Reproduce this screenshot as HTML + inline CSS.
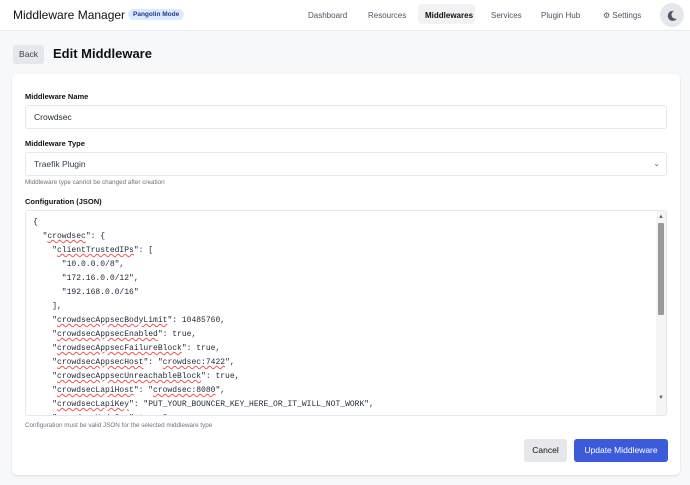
<!DOCTYPE html><html><head><style>
*{box-sizing:border-box;margin:0;padding:0}
body{width:690px;height:485px;background:#f7f8fa;font-family:"Liberation Sans",sans-serif;color:#1f2937;overflow:hidden;position:relative}
.nav{position:absolute;left:0;top:0;width:690px;height:31px;background:#fff;border-bottom:1px solid #e8eaee}
.abs{position:absolute;white-space:nowrap}
.title{left:13px;top:8px;font-size:12px;color:#111}
.badge{left:128px;top:9px;font-size:6.5px;font-weight:bold;background:#dbeafe;color:#1e3a8a;border-radius:7px;padding:2px 5px}
.nl{font-size:8px;color:#4b5563;top:11px}
.act{left:418px;top:4px;width:57px;height:20px;background:#f1f2f4;border-radius:4px}
.moon{left:660px;top:3px;width:24px;height:24px;border-radius:50%;background:#e5e7eb}
.back{left:13px;top:45px;width:31px;height:19px;background:#e5e7eb;border-radius:3px;font-size:8.5px;text-align:center;line-height:19px;color:#374151}
.h1{left:53px;top:46px;font-size:13px;font-weight:bold;color:#111}
.card{left:12px;top:74px;width:668px;height:401px;background:#fff;border-radius:5px;box-shadow:0 1px 2px rgba(0,0,0,.12)}
.lbl{font-size:7.5px;font-weight:bold;color:#111;left:25px}
.inp{left:25px;width:642px;height:24px;border:1px solid #e5e7eb;border-radius:3px;font-size:8.5px;padding-left:8px;line-height:22px;background:#fff}
.help{left:25px;font-size:6.3px;color:#6b7280}
.ta{left:25px;top:210px;width:642px;height:206px;border:1px solid #e5e7eb;border-radius:3px;overflow:hidden}
pre{position:absolute;left:7px;top:5px;font-family:"Liberation Mono",monospace;font-size:8px;line-height:14px;color:#1f2937}
u{text-decoration:underline wavy #e55;text-decoration-thickness:0.5px}
.sb{right:0;top:0;width:10px;height:204px;background:#f5f5f5}
.thumb{left:2px;top:12px;width:6px;height:92px;background:#999;border-radius:1px}
.btn{font-size:8.5px;border-radius:3px;text-align:center;line-height:23px;height:23px;top:439px}
</style></head><body>
<div class="nav"></div>
<div class="abs title">Middleware Manager</div>
<div class="abs badge">Pangolin Mode</div>
<div class="abs act"></div>
<div class="abs nl" style="left:308px">Dashboard</div>
<div class="abs nl" style="left:368px">Resources</div>
<div class="abs nl" style="left:425px;color:#111;font-weight:bold">Middlewares</div>
<div class="abs nl" style="left:491px">Services</div>
<div class="abs nl" style="left:541px">Plugin Hub</div>
<div class="abs nl" style="left:603px">⚙ Settings</div>
<div class="abs moon"><svg width="24" height="24" viewBox="0 0 24 24"><path d="M14 8a5 5 0 1 0 3 7.5a4 4 0 0 1-3-7.5z" fill="#4b5563"/></svg></div>
<div class="abs back">Back</div>
<div class="abs h1">Edit Middleware</div>
<div class="abs card"></div>
<div class="abs lbl" style="top:92px">Middleware Name</div>
<div class="abs inp" style="top:105px">Crowdsec</div>
<div class="abs lbl" style="top:139px">Middleware Type</div>
<div class="abs inp" style="top:152px;color:#374151">Traefik Plugin<span style="position:absolute;right:6px;top:0;font-size:8px;color:#666">⌄</span></div>
<div class="abs help" style="top:179px">Middleware type cannot be changed after creation</div>
<div class="abs lbl" style="top:197px">Configuration (JSON)</div>
<div class="abs ta"><pre>{
  "<u>crowdsec</u>": {
    "<u>clientTrustedIPs</u>": [
      "10.0.0.0/8",
      "172.16.0.0/12",
      "192.168.0.0/16"
    ],
    "<u>crowdsecAppsecBodyLimit</u>": 10485760,
    "<u>crowdsecAppsecEnabled</u>": true,
    "<u>crowdsecAppsecFailureBlock</u>": true,
    "<u>crowdsecAppsecHost</u>": "<u>crowdsec:7422</u>",
    "<u>crowdsecAppsecUnreachableBlock</u>": true,
    "<u>crowdsecLapiHost</u>": "<u>crowdsec:8080</u>",
    "<u>crowdsecLapiKey</u>": "PUT_YOUR_BOUNCER_KEY_HERE_OR_IT_WILL_NOT_WORK",
    "<u>crowdsecMode</u>": "<u>stream</u>",
</pre><div class="abs sb"><div class="abs" style="left:2px;top:3px;font-size:6px;color:#666">▲</div><div class="abs thumb"></div><div class="abs" style="left:2px;top:184px;font-size:6px;color:#666">▼</div></div></div>
<div class="abs help" style="top:422px">Configuration must be valid JSON for the selected middleware type</div>
<div class="abs btn" style="left:524px;width:43px;background:#e5e7eb;color:#111">Cancel</div>
<div class="abs btn" style="left:574px;width:94px;background:#3b5bdb;color:#fff">Update Middleware</div>
</body></html>
